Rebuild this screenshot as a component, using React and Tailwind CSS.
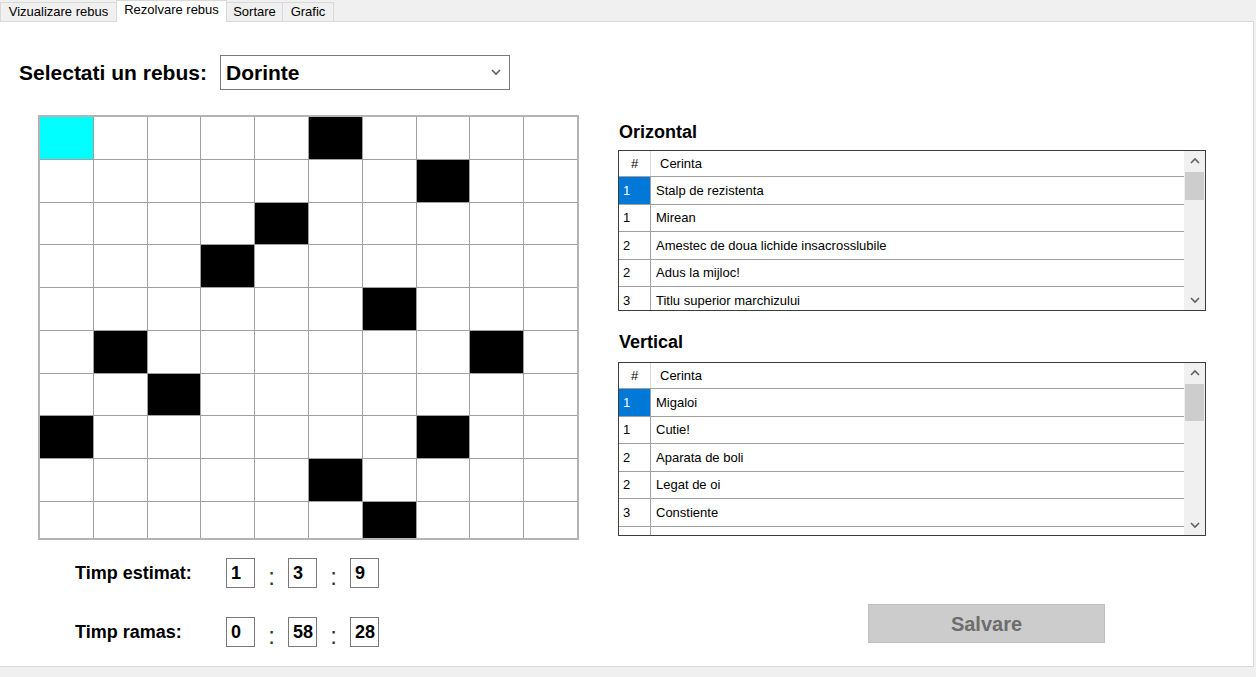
const blacks = ['0-5', '1-7', '2-4', '3-3', '4-6', '5-1', '5-8', '6-2', '7-0', '7-7', '8-5', '9-6'];

const orizontal = [
  ['1', 'Stalp de rezistenta'],
  ['1', 'Mirean'],
  ['2', 'Amestec de doua lichide insacrosslubile'],
  ['2', 'Adus la mijloc!'],
  ['3', 'Titlu superior marchizului'],
];

const vertical = [
  ['1', 'Migaloi'],
  ['1', 'Cutie!'],
  ['2', 'Aparata de boli'],
  ['2', 'Legat de oi'],
  ['3', 'Constiente'],
  ['3', 'Cuvinte'],
];

const tabs = [
  { label: 'Vizualizare rebus', w: 'w-[117px]' },
  { label: 'Rezolvare rebus', w: 'w-[111px]' },
  { label: 'Sortare', w: 'w-[57px]' },
  { label: 'Grafic', w: 'w-[52px]' },
];

function Chevron({ up }) {
  return (
    <svg width="10" height="7" viewBox="0 0 10 7">
      <polyline
        points={up ? '1,6 5,2 9,6' : '1,1 5,5 9,1'}
        fill="none"
        stroke="#606060"
        strokeWidth="1.6"
      />
    </svg>
  );
}

function ClueTable({ rows, height, thumbH }) {
  return (
    <div className={`flex w-[588px] border border-[#3c3c3c] bg-white ${height}`}>
      <div className="flex-1 overflow-hidden text-[13px] text-black">
        <div className="flex h-[26px] border-b border-[#a0a0a0]">
          <div className="flex w-[32px] items-center justify-center border-r border-[#d8d8d8]">#</div>
          <div className="flex items-center pl-[9px]">Cerinta</div>
        </div>
        {rows.map(([n, text], i) => (
          <div key={i} className="flex h-[27.5px] border-b border-[#a0a0a0]">
            <div
              className={`flex w-[32px] items-center border-r border-[#a0a0a0] pl-[4px] ${
                i === 0 ? 'bg-[#0078d7] text-white' : ''
              }`}
            >
              {n}
            </div>
            <div className="flex items-center pl-[5px]">{text}</div>
          </div>
        ))}
      </div>
      <div className="flex w-[21px] flex-col bg-[#f0f0f0]">
        <div className="flex h-[19px] items-center justify-center">
          <Chevron up />
        </div>
        <div className={`mx-[1px] mt-[2px] bg-[#cdcdcd] ${thumbH}`} />
        <div className="flex-1" />
        <div className="flex h-[19px] items-center justify-center">
          <Chevron />
        </div>
      </div>
    </div>
  );
}

function TimeRow({ label, values }) {
  return (
    <div className="flex items-center">
      <div className="w-[151px] text-[18px] font-bold">{label}</div>
      {values.map((v, i) => (
        <div key={i} className="flex items-center">
          {i > 0 && (
            <div className="flex h-[30px] w-[33px] items-end justify-center text-[24px] leading-none text-[#333]">
              <span className="mb-[-1px]">:</span>
            </div>
          )}
          <div className="flex h-[30px] w-[29px] items-center border border-[#7a7a7a] pl-[4px] text-[18px] font-bold">
            {v}
          </div>
        </div>
      ))}
    </div>
  );
}

export default function App() {
  return (
    <div className="h-[677px] w-[1256px] overflow-hidden bg-[#f0f0f0] font-['Liberation_Sans',Arial,sans-serif] text-black">
      <div className="flex h-[21px] items-end">
        {tabs.map(({ label, w }) => {
          const active = label === 'Rezolvare rebus';
          return (
            <div
              key={label}
              className={`relative -mr-px flex items-center justify-center border border-b-0 border-[#d9d9d9] text-[13px] ${w} ${
                active ? 'z-10 mb-[-1px] h-[22px] bg-white pb-[3px]' : 'h-[19px] bg-[#f0f0f0]'
              }`}
            >
              {label}
            </div>
          );
        })}
      </div>

      <div className="h-[646px] w-[1254px] border-t border-r border-b border-[#d9d9d9] bg-white">
        <div className="flex items-center pt-[33px] pl-[19px]">
          <div className="w-[201px] text-[21px] font-bold">Selectati un rebus:</div>
          <div className="flex h-[35px] w-[290px] items-center justify-between border border-[#7a7a7a] pr-[8px] pl-[5px]">
            <span className="text-[21px] font-bold">Dorinte</span>
            <Chevron />
          </div>
        </div>

        <div className="mt-[25px] flex">
          <div className="ml-[38px]">
            <div className="grid h-[425px] w-[541px] auto-rows-[41.75px] grid-cols-10 content-start gap-px overflow-hidden border-2 border-[#b4b4b4] bg-[#a0a0a0]">
              {Array.from({ length: 100 }, (_, k) => {
                const r = Math.floor(k / 10);
                const c = k % 10;
                const bg = k === 0 ? 'bg-[#00ffff]' : blacks.includes(`${r}-${c}`) ? 'bg-black' : 'bg-white';
                return <div key={k} className={bg} />;
              })}
            </div>
            <div className="mt-[18px] flex flex-col gap-[29px] pl-[37px]">
              <TimeRow label="Timp estimat:" values={['1', '3', '9']} />
              <TimeRow label="Timp ramas:" values={['0', '58', '28']} />
            </div>
          </div>

          <div className="ml-[39px] flex flex-col">
            <div className="mt-[7px] mb-[8px] pl-[1px] text-[18px] leading-[20px] font-bold">Orizontal</div>
            <ClueTable rows={orizontal} height="h-[161px]" thumbH="h-[28px]" />
            <div className="mt-[21px] mb-[10px] pl-[1px] text-[18px] leading-[20px] font-bold">Vertical</div>
            <ClueTable rows={vertical} height="h-[174px]" thumbH="h-[37px]" />
            <button className="mt-[68px] ml-[250px] h-[39px] w-[237px] border border-[#bfbfbf] bg-[#cccccc] text-[20px] font-bold text-[#6d6d6d]">
              Salvare
            </button>
          </div>
        </div>
      </div>
    </div>
  );
}
